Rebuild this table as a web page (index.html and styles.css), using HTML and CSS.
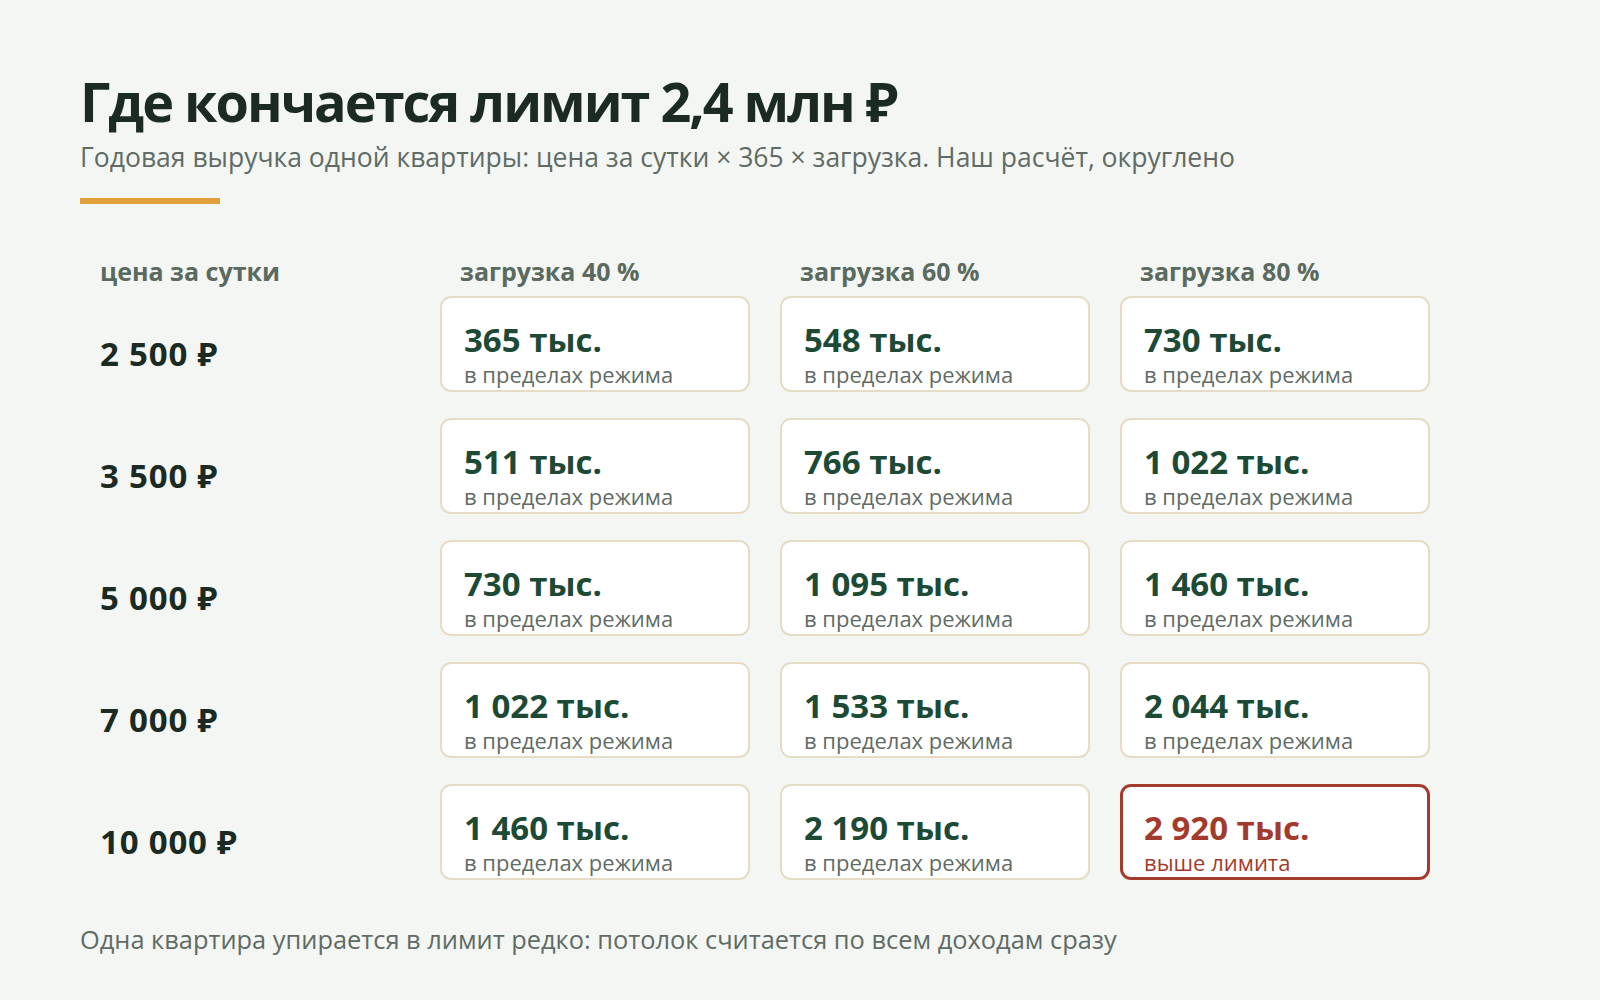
FILE: index.html
```html
<!DOCTYPE html>
<html lang="ru">
<head>
<meta charset="utf-8">
<link rel="stylesheet" href="styles.css">
</head>
<body>
<main class="page">
  <h1 class="title">Где кончается лимит 2,4 млн ₽</h1>
  <p class="subtitle">Годовая выручка одной квартиры: цена за сутки × 365 × загрузка. Наш расчёт, округлено</p>
  <div class="accent"></div>

  <div class="grid">
    <div class="head">цена за сутки</div>
    <div class="head head-col">загрузка 40 %</div>
    <div class="head head-col">загрузка 60 %</div>
    <div class="head head-col">загрузка 80 %</div>

    <div class="price">2 500 ₽</div>
    <div class="card"><div class="num">365 тыс.</div><div class="note">в пределах режима</div></div>
    <div class="card"><div class="num">548 тыс.</div><div class="note">в пределах режима</div></div>
    <div class="card"><div class="num">730 тыс.</div><div class="note">в пределах режима</div></div>

    <div class="price">3 500 ₽</div>
    <div class="card"><div class="num">511 тыс.</div><div class="note">в пределах режима</div></div>
    <div class="card"><div class="num">766 тыс.</div><div class="note">в пределах режима</div></div>
    <div class="card"><div class="num">1 022 тыс.</div><div class="note">в пределах режима</div></div>

    <div class="price">5 000 ₽</div>
    <div class="card"><div class="num">730 тыс.</div><div class="note">в пределах режима</div></div>
    <div class="card"><div class="num">1 095 тыс.</div><div class="note">в пределах режима</div></div>
    <div class="card"><div class="num">1 460 тыс.</div><div class="note">в пределах режима</div></div>

    <div class="price">7 000 ₽</div>
    <div class="card"><div class="num">1 022 тыс.</div><div class="note">в пределах режима</div></div>
    <div class="card"><div class="num">1 533 тыс.</div><div class="note">в пределах режима</div></div>
    <div class="card"><div class="num">2 044 тыс.</div><div class="note">в пределах режима</div></div>

    <div class="price">10 000 ₽</div>
    <div class="card"><div class="num">1 460 тыс.</div><div class="note">в пределах режима</div></div>
    <div class="card"><div class="num">2 190 тыс.</div><div class="note">в пределах режима</div></div>
    <div class="card card-over"><div class="num">2 920 тыс.</div><div class="note">выше лимита</div></div>
  </div>

  <p class="footer">Одна квартира упирается в лимит редко: потолок считается по всем доходам сразу</p>
</main>
</body>
</html>
```

FILE: styles.css
```css
html, body {
  margin: 0;
  padding: 0;
}
body {
  background: #f3f6f3;
  font-family: "Open Sans", "Noto Sans", "Liberation Sans", sans-serif;
  color: #1b2a22;
}
.page {
  padding: 63px 80px 0 80px;
}
.title {
  margin: 0;
  font-size: 54px;
  font-weight: 700;
  line-height: 76px;
  letter-spacing: -2px;
  color: #1b2a22;
}
.subtitle {
  margin: 0;
  font-size: 26.5px;
  line-height: 36px;
  color: #5f6b64;
}
.accent {
  width: 140px;
  height: 6px;
  background: #e0a03c;
  margin-top: 23px;
}
.grid {
  display: grid;
  grid-template-columns: 330px 310px 310px 310px;
  column-gap: 30px;
  row-gap: 26px;
  margin-top: 51px;
}
.head {
  font-size: 25px;
  font-weight: 700;
  color: #5a6a5f;
  padding-left: 20px;
  line-height: 32px;
  height: 32px;
  margin-bottom: -17px;
}
.price {
  padding-left: 20px;
  padding-top: 38px;
  font-size: 33px;
  line-height: 40px;
  letter-spacing: 0.8px;
  font-weight: 700;
  color: #1b2a22;
}
.card {
  height: 96px;
  box-sizing: border-box;
  background: #ffffff;
  border: 2px solid #e6dcc6;
  border-radius: 11px;
  padding: 22px 22px 0 22px;
}
.num {
  font-size: 33px;
  font-weight: 700;
  color: #1d4a35;
  line-height: 40px;
}
.note {
  font-size: 22px;
  color: #5f6b64;
  line-height: 28px;
}
.card-over {
  border: 3px solid #a33b2c;
  padding: 21px 21px 0 21px;
}
.card-over .num,
.card-over .note {
  color: #a33b2c;
}
.footer {
  margin: 43px 0 0 0;
  font-size: 25.4px;
  color: #5f6b64;
  line-height: 32px;
}
```
